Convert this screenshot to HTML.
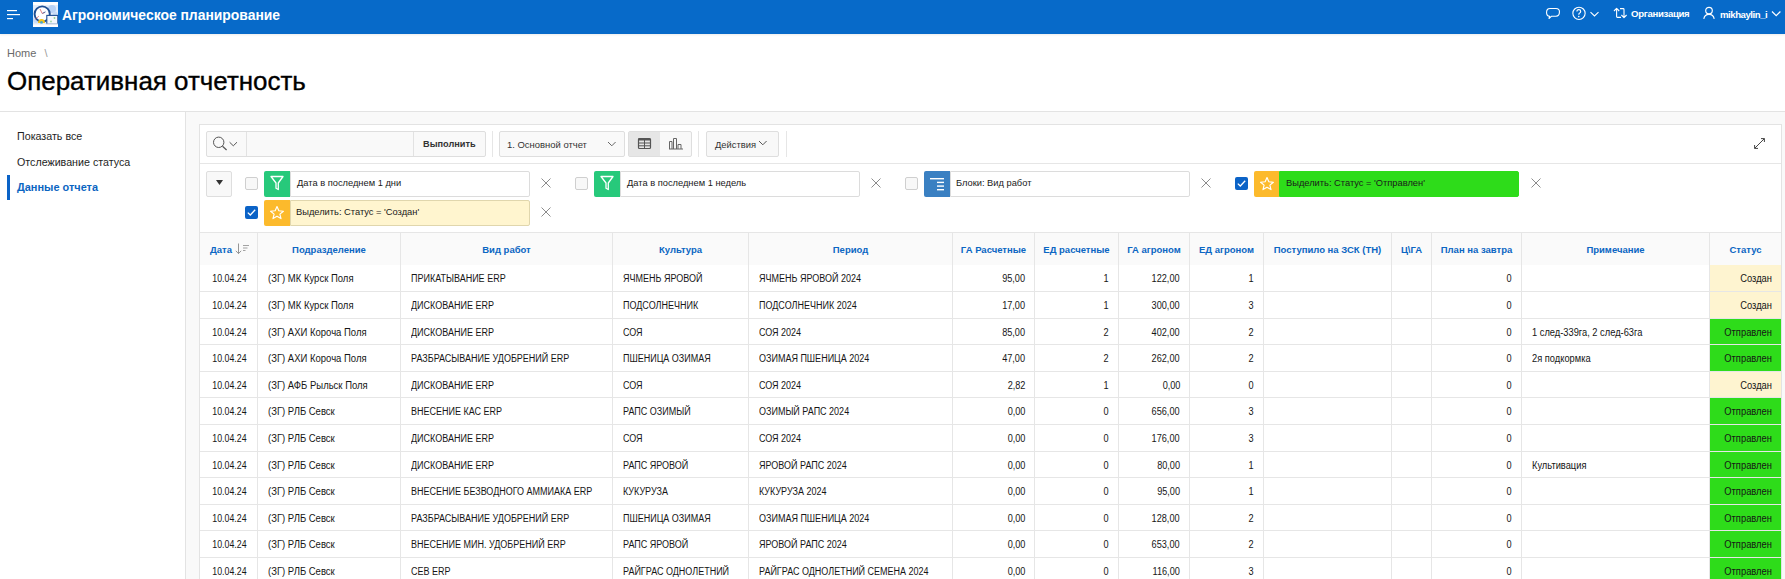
<!DOCTYPE html>
<html><head><meta charset="utf-8">
<style>
*{box-sizing:border-box;margin:0;padding:0}
html,body{width:1785px;height:579px;overflow:hidden;background:#f9f9f9;font-family:"Liberation Sans",sans-serif;color:#262626}
.a{position:absolute}
#hdr{left:0;top:0;width:1785px;height:34px;background:#076ac9}
#crumb{left:0;top:34px;width:1785px;height:78px;background:#fff;border-bottom:1px solid #e3e3e3}
#side{left:0;top:112px;width:186px;height:467px;background:#fff;border-right:1px solid #e3e3e3}
#reg{left:199px;top:124px;width:1583px;height:460px;background:#fff;border:1px solid #e3e3e3}
.t{white-space:nowrap;line-height:1}
.nav{left:17px;font-size:10.7px;color:#1e1e1e}
.sep{width:1px;background:#e6e6e6}
.btn{border:1px solid #dedede;background:#f8f8f8;border-radius:2px}
.chk{width:13px;height:13px;border:1px solid #cfcfcf;background:#f8f8f8;border-radius:2px}
.chk.on{background:#0b63c7;border-color:#0b63c7}
.ico{width:26px;height:26px;border-radius:2px 0 0 2px}
.lbl{height:26px;border:1px solid #dcdcdc;background:#fff;border-radius:0 2px 2px 0}
.ft{font-size:9.3px;color:#1a1a1a}
.x{width:10px;height:10px}
.trow{left:200px;width:1581px;display:flex;border-bottom:1px solid #e6e6e6;font-size:9.15px;color:#161616}
.trow .c{height:100%;border-right:1px solid #e6e6e6;display:flex;align-items:center;justify-content:center;white-space:nowrap;overflow:hidden;padding-top:1px}
.trow .c.nb{border-right:0}
.trow .c.l{justify-content:flex-start;padding-left:10px}
.trow .c.r{justify-content:flex-end;padding-right:9px}
.trow .c.up{font-size:8.9px}
.th{border-top:1px solid #e6e6e6;border-bottom:0;background:#fafafa;font-weight:bold;color:#0b66c3;font-size:9.5px}
.th .c{padding-top:0}
.trow .s{display:inline-block;font-size:10px;transform:scaleX(0.915)}
.trow .l .s{transform-origin:0 50%}
.trow .r .s{transform-origin:100% 50%}
.trow .up .s{transform:scaleX(0.9)}
.trow .c:nth-child(1) .s{transform:scaleX(0.88);margin-left:1px}
.trow .c:nth-child(2) .s{transform:scaleX(0.95)}
.trow .c:nth-child(13) .s{transform:scaleX(0.93)}
.trow .c:nth-child(14) .s{transform:scaleX(0.935)}

.st1{background:#fef4d0}
.st2{background:#2edc1a}
</style></head><body>
<div id="hdr" class="a" style="box-shadow:0 1px 2px rgba(0,0,0,.08);z-index:2">
  <svg class="a" style="left:7px;top:9px" width="14" height="11" viewBox="0 0 14 11"><rect x="0" y="1" width="10" height="1.2" fill="#fff"/><rect x="0" y="5" width="13" height="1.2" fill="#fff"/><rect x="0" y="9" width="6" height="1.2" fill="#fff"/></svg>
  <svg class="a" style="left:33px;top:2px" width="25" height="25" viewBox="0 0 25 25"><rect width="25" height="25" fill="#fff"/><rect x="0" y="3" width="25" height="19" fill="#e3eefb"/><circle cx="19" cy="7" r="4" fill="#b9d3f5"/><circle cx="22" cy="12" r="2.5" fill="#c7dcf7"/><circle cx="3" cy="18" r="3" fill="#c7dcf7"/><circle cx="9.2" cy="12" r="7.6" fill="#fff" stroke="#1f4f93" stroke-width="1.9"/><path d="M7,7 L9.2,11.5 L12,10.4" fill="none" stroke="#d94a4a" stroke-width="0.7"/><path d="M9.5,11.3 L12.6,9.8" stroke="#2d5fa8" stroke-width="0.8"/><path d="M2,17.5 L6,14" stroke="#d94a4a" stroke-width="0.6"/><rect x="13.8" y="13.4" width="11" height="8.8" fill="#f4f8fd" stroke="#1f4f93" stroke-width="1.1"/><circle cx="21.5" cy="16" r="0.9" fill="#8fd18f"/><circle cx="18" cy="19.5" r="0.9" fill="#9fd59f"/><path d="M5,21 Q5,17 8.5,17 Q12,17 12,21 Z" fill="#f3c21a"/><circle cx="8.5" cy="20.5" r="1.5" fill="#4aa6c9"/><rect x="0" y="22.2" width="25" height="2.8" fill="#fff"/><rect x="0" y="21.6" width="25" height="0.8" fill="#dfe8f3"/></svg>
  <div class="a t" style="left:62px;top:9px;font-size:13.9px;font-weight:bold;color:#fff">Агрономическое планирование</div>
  <svg class="a" style="left:1544px;top:6px" width="18" height="15" viewBox="0 0 18 15"><path d="M6,2.55 H12 Q15.45,2.55 15.45,5.8 Q15.45,10.2 12,10.2 H7.6 L5,12.5 L5.6,10.2 Q2.55,10 2.55,6.4 Q2.55,2.55 6,2.55 Z" fill="none" stroke="#fff" stroke-width="1.1" stroke-linejoin="round"/></svg>
  <svg class="a" style="left:1570px;top:5px" width="30" height="16" viewBox="0 0 30 16"><circle cx="9" cy="8.35" r="6.15" fill="none" stroke="#fff" stroke-width="1.1"/><path d="M6.9,6.6 Q6.9,4.6 8.8,4.6 Q10.7,4.6 10.7,6.4 Q10.7,7.6 9.4,8.2 Q8.8,8.6 8.8,9.7" fill="none" stroke="#fff" stroke-width="1.15"/><circle cx="8.8" cy="11.6" r="0.8" fill="#fff"/><polyline points="20.5,7.2 24.5,11 28.5,7.2" fill="none" stroke="#fff" stroke-width="1.1"/></svg>
  <svg class="a" style="left:1612px;top:6px" width="17" height="15" viewBox="0 0 17 15"><path d="M9,11.4 H5.4 Q4.6,11.4 4.6,10.6 V2.4 M2,5 L4.6,2.3 L7.2,5" fill="none" stroke="#fff" stroke-width="1.1" stroke-linejoin="round"/><path d="M8,2.6 H11.2 Q12,2.6 12,3.4 V11.6 M9.4,9 L12,11.7 L14.6,9" fill="none" stroke="#fff" stroke-width="1.1" stroke-linejoin="round"/></svg>
  <div class="a t" style="left:1631px;top:9px;font-size:9.6px;color:#fff;font-weight:bold;letter-spacing:-0.3px">Организация</div>
  <svg class="a" style="left:1702px;top:6px" width="14" height="14" viewBox="0 0 14 14"><circle cx="7" cy="4.6" r="3.3" fill="none" stroke="#fff" stroke-width="1.15"/><path d="M1.8,12.8 Q2.6,8.4 7,8.4 Q11.4,8.4 12.2,12.8" fill="none" stroke="#fff" stroke-width="1.15"/></svg>
  <div class="a t" style="left:1720px;top:9.5px;font-size:9.6px;color:#fff;font-weight:bold;letter-spacing:-0.45px">mikhaylin_i</div>
  <svg class="a" style="left:1771px;top:10px" width="11" height="8" viewBox="0 0 11 8"><polyline points="1,1.5 5.2,5.7 9.4,1.5" fill="none" stroke="#fff" stroke-width="1.2"/></svg>
</div>
<div id="crumb" class="a">
  <div class="a t" style="left:7px;top:14px;font-size:11px;color:#6a6a6a">Home <span style="margin-left:5px;color:#9a9a9a">\</span></div>
  <div class="a t" style="left:7px;top:35px;font-size:25.95px;color:#000;-webkit-text-stroke:0.35px #000">Оперативная отчетность</div>
</div>
<div id="side" class="a">
  <div class="a t nav" style="top:19px">Показать все</div>
  <div class="a t nav" style="top:45px">Отслеживание статуса</div>
  <div class="a" style="left:7px;top:63px;width:3px;height:25px;background:#0b63c7"></div>
  <div class="a t nav" style="top:70px;font-weight:bold;color:#0b65c2;font-size:10.95px">Данные отчета</div>
</div>
<div id="reg" class="a"></div>
<!-- toolbar (absolute to page) -->
<div class="a" style="left:200px;top:163px;width:1581px;height:1px;background:#e6e6e6"></div>
<div class="a btn" style="left:206px;top:131px;width:280px;height:26px;background:#f9f9f9"></div>
<div class="a sep" style="left:246px;top:132px;height:24px;background:#e2e2e2"></div>
<div class="a sep" style="left:413px;top:132px;height:24px;background:#e2e2e2"></div>
<svg class="a" style="left:211px;top:135px" width="30" height="17" viewBox="0 0 30 17"><circle cx="7.7" cy="7.3" r="5.2" fill="none" stroke="#555" stroke-width="1"/><line x1="11.5" y1="11.2" x2="15.6" y2="15" stroke="#555" stroke-width="1.2"/><polyline points="18.6,7.2 22.3,10.8 26,7.2" fill="none" stroke="#555" stroke-width="1"/></svg>
<div class="a t" style="left:423px;top:140px;font-size:9.2px;font-weight:bold;color:#333">Выполнить</div>
<div class="a sep" style="left:492px;top:131px;height:26px"></div>
<div class="a btn" style="left:499px;top:131px;width:126px;height:26px;background:#f9f9f9"></div>
<div class="a t" style="left:507px;top:140px;font-size:9.45px;color:#333">1. Основной отчет</div>
<svg class="a" style="left:607px;top:141px" width="10" height="6" viewBox="0 0 10 6"><polyline points="1,1 4.8,4.8 8.6,1" fill="none" stroke="#666" stroke-width="1"/></svg>
<div class="a btn" style="left:628px;top:131px;width:64px;height:26px;background:#f8f8f8"></div>
<div class="a" style="left:629px;top:132px;width:31px;height:24px;background:#e6e6e6"></div>
<svg class="a" style="left:637px;top:137px" width="15" height="13" viewBox="0 0 15 13"><rect x="1.5" y="1.5" width="12" height="10" rx="1" fill="none" stroke="#555" stroke-width="1.2"/><rect x="1.5" y="1.5" width="12" height="2" fill="#555"/><line x1="1.5" y1="6" x2="13.5" y2="6" stroke="#555"/><line x1="1.5" y1="8.8" x2="13.5" y2="8.8" stroke="#555"/><line x1="7.5" y1="3" x2="7.5" y2="11.5" stroke="#555"/></svg>
<svg class="a" style="left:668px;top:137px" width="16" height="13" viewBox="0 0 16 13"><polyline points="1.5,12 1.5,4.5 4,4.5 4,12" fill="none" stroke="#666" stroke-width="1"/><polyline points="5.5,12 5.5,1.5 8.5,1.5 8.5,12" fill="none" stroke="#666" stroke-width="1"/><polyline points="10,12 10,7.5 13,7.5 13,12" fill="none" stroke="#666" stroke-width="1"/><line x1="1" y1="12" x2="15" y2="12" stroke="#666"/></svg>
<div class="a sep" style="left:698px;top:131px;height:26px"></div>
<div class="a btn" style="left:706px;top:131px;width:73px;height:26px;background:#f8f8f8"></div>
<div class="a t" style="left:715px;top:141px;font-size:9.35px;color:#333">Действия</div>
<svg class="a" style="left:758px;top:140px" width="10" height="6" viewBox="0 0 10 6"><polyline points="1,1 4.8,4.8 8.6,1" fill="none" stroke="#555" stroke-width="1"/></svg>
<div class="a sep" style="left:786px;top:131px;height:26px"></div>
<svg class="a" style="left:1752px;top:136px" width="15" height="15" viewBox="0 0 15 15"><line x1="2.6" y1="12.4" x2="12.4" y2="2.6" stroke="#444" stroke-width="1"/><polyline points="2.6,9 2.6,12.4 6,12.4" fill="none" stroke="#444" stroke-width="1"/><polyline points="9,2.6 12.4,2.6 12.4,6" fill="none" stroke="#444" stroke-width="1"/></svg>

<div class="a btn" style="left:206px;top:171px;width:26px;height:26px"></div>
<svg class="a" style="left:215px;top:179px" width="9" height="7" viewBox="0 0 9 7"><path d="M1,1 H8 L4.5,6 Z" fill="#333"/></svg>
<div class="a chk" style="left:245px;top:177px"></div>
<div class="a ico" style="left:264px;top:171px;background:#27c97b"></div>
<svg class="a" style="left:270px;top:175px" width="14" height="16" viewBox="0 0 14 16"><path d="M1,1.5 H13 L8.3,8 V14.5 L6,13.2 V8 Z" fill="none" stroke="#fff" stroke-width="1.3" stroke-linejoin="round"/></svg>
<div class="a lbl" style="left:290px;top:171px;width:240px;background:#fff;border-color:#dcdcdc"></div>
<div class="a t ft" style="left:297px;top:178.5px">Дата в последнем 1 дни</div>
<svg class="a" style="left:541px;top:178px" width="10" height="10" viewBox="0 0 10 10"><path d="M0.5,0.5 L9.5,9.5 M9.5,0.5 L0.5,9.5" stroke="#8c8c8c" stroke-width="1"/></svg>
<div class="a chk" style="left:575px;top:177px"></div>
<div class="a ico" style="left:594px;top:171px;background:#27c97b"></div>
<svg class="a" style="left:600px;top:175px" width="14" height="16" viewBox="0 0 14 16"><path d="M1,1.5 H13 L8.3,8 V14.5 L6,13.2 V8 Z" fill="none" stroke="#fff" stroke-width="1.3" stroke-linejoin="round"/></svg>
<div class="a lbl" style="left:620px;top:171px;width:240px;background:#fff;border-color:#dcdcdc"></div>
<div class="a t ft" style="left:627px;top:178.5px">Дата в последнем 1 недель</div>
<svg class="a" style="left:871px;top:178px" width="10" height="10" viewBox="0 0 10 10"><path d="M0.5,0.5 L9.5,9.5 M9.5,0.5 L0.5,9.5" stroke="#8c8c8c" stroke-width="1"/></svg>
<div class="a chk" style="left:905px;top:177px"></div>
<div class="a ico" style="left:924px;top:171px;background:#3a80c2"></div>
<svg class="a" style="left:929px;top:177px" width="16" height="14" viewBox="0 0 16 14"><rect x="1" y="1" width="14" height="1.4" fill="#fff"/><rect x="8" y="4.7" width="7" height="1.4" fill="#fff"/><rect x="8" y="8.4" width="7" height="1.4" fill="#fff"/><rect x="8" y="12" width="7" height="1.4" fill="#fff"/></svg>
<div class="a lbl" style="left:950px;top:171px;width:240px;background:#fff;border-color:#dcdcdc"></div>
<div class="a t ft" style="left:956px;top:178.5px">Блоки: Вид работ</div>
<svg class="a" style="left:1201px;top:178px" width="10" height="10" viewBox="0 0 10 10"><path d="M0.5,0.5 L9.5,9.5 M9.5,0.5 L0.5,9.5" stroke="#8c8c8c" stroke-width="1"/></svg>
<svg class="a" style="left:1235px;top:177px" width="13" height="13" viewBox="0 0 13 13"><rect x="0" y="0" width="13" height="13" rx="2" fill="#0b63c7"/><polyline points="2.8,6.6 5.3,9 10.2,3.8" fill="none" stroke="#fff" stroke-width="1.3"/></svg>
<div class="a ico" style="left:1254px;top:171px;width:25px;background:#fcba2c"></div>
<svg class="a" style="left:1259px;top:176px" width="16" height="15" viewBox="0 0 16 15"><path d="M8,1.6 L9.85,5.8 L14.4,6.2 L10.9,9.1 L12,13.6 L8,11.2 L4,13.6 L5.1,9.1 L1.6,6.2 L6.15,5.8 Z" fill="none" stroke="#fff" stroke-width="1.15" stroke-linejoin="round"/></svg>
<div class="a lbl" style="left:1279px;top:171px;width:240px;background:#2edc1a;border-color:#2edc1a"></div>
<div class="a t ft" style="left:1286px;top:178.5px">Выделить: Статус = 'Отправлен'</div>
<svg class="a" style="left:1531px;top:178px" width="10" height="10" viewBox="0 0 10 10"><path d="M0.5,0.5 L9.5,9.5 M9.5,0.5 L0.5,9.5" stroke="#8c8c8c" stroke-width="1"/></svg>
<svg class="a" style="left:245px;top:206px" width="13" height="13" viewBox="0 0 13 13"><rect x="0" y="0" width="13" height="13" rx="2" fill="#0b63c7"/><polyline points="2.8,6.6 5.3,9 10.2,3.8" fill="none" stroke="#fff" stroke-width="1.3"/></svg>
<div class="a ico" style="left:264px;top:200px;background:#fcba2c"></div>
<svg class="a" style="left:269px;top:205px" width="16" height="15" viewBox="0 0 16 15"><path d="M8,1.6 L9.85,5.8 L14.4,6.2 L10.9,9.1 L12,13.6 L8,11.2 L4,13.6 L5.1,9.1 L1.6,6.2 L6.15,5.8 Z" fill="none" stroke="#fff" stroke-width="1.15" stroke-linejoin="round"/></svg>
<div class="a lbl" style="left:290px;top:200px;width:240px;background:#fff5cf;border-color:#e0d6ad"></div>
<div class="a t ft" style="left:296px;top:207.5px">Выделить: Статус = 'Создан'</div>
<svg class="a" style="left:541px;top:207px" width="10" height="10" viewBox="0 0 10 10"><path d="M0.5,0.5 L9.5,9.5 M9.5,0.5 L0.5,9.5" stroke="#8c8c8c" stroke-width="1"/></svg>
<!--TABLE-->
<div class="a trow th" style="top:232px;height:33px">
<div class="c" style="width:58px;justify-content:flex-start;padding-left:10px">Дата<svg style="margin-left:3px;margin-top:-1px" width="15" height="12" viewBox="0 0 15 12"><path d="M3.5,0.5 V10.5 M0.8,7.8 L3.5,10.6 L6.2,7.8" fill="none" stroke="#8a8a8a" stroke-width="0.9"/><path d="M8,2.5 H14 M8,5 H12.5 M8,7.5 H10.5" stroke="#999" stroke-width="0.9"/></svg></div>
<div class="c" style="width:143px">Подразделение</div>
<div class="c" style="width:212px">Вид работ</div>
<div class="c" style="width:136px">Культура</div>
<div class="c" style="width:204px">Период</div>
<div class="c" style="width:82px">ГА Расчетные</div>
<div class="c" style="width:84px">ЕД расчетные</div>
<div class="c" style="width:71px">ГА агроном</div>
<div class="c" style="width:74px">ЕД агроном</div>
<div class="c" style="width:128px">Поступило на ЗСК (ТН)</div>
<div class="c" style="width:40px">Ц\ГА</div>
<div class="c" style="width:90px">План на завтра</div>
<div class="c" style="width:188px">Примечание</div>
<div class="c nb" style="width:71px">Статус</div>
</div>
<div class="a trow" style="top:265px;height:27px">
<div class="c" style="width:58px"><span class="s">10.04.24</span></div>
<div class="c l" style="width:143px"><span class="s">(ЗГ) МК Курск Поля</span></div>
<div class="c l up" style="width:212px"><span class="s">ПРИКАТЫВАНИЕ ERP</span></div>
<div class="c l up" style="width:136px"><span class="s">ЯЧМЕНЬ ЯРОВОЙ</span></div>
<div class="c l up" style="width:204px"><span class="s">ЯЧМЕНЬ ЯРОВОЙ 2024</span></div>
<div class="c r" style="width:82px"><span class="s">95,00</span></div>
<div class="c r" style="width:84px"><span class="s">1</span></div>
<div class="c r" style="width:71px"><span class="s">122,00</span></div>
<div class="c r" style="width:74px"><span class="s">1</span></div>
<div class="c l" style="width:128px"></div>
<div class="c l" style="width:40px"></div>
<div class="c r" style="width:90px"><span class="s">0</span></div>
<div class="c l" style="width:188px"></div>
<div class="c r nb st1" style="width:71px"><span class="s">Создан</span></div>
</div>
<div class="a trow" style="top:292px;height:27px">
<div class="c" style="width:58px"><span class="s">10.04.24</span></div>
<div class="c l" style="width:143px"><span class="s">(ЗГ) МК Курск Поля</span></div>
<div class="c l up" style="width:212px"><span class="s">ДИСКОВАНИЕ ERP</span></div>
<div class="c l up" style="width:136px"><span class="s">ПОДСОЛНЕЧНИК</span></div>
<div class="c l up" style="width:204px"><span class="s">ПОДСОЛНЕЧНИК 2024</span></div>
<div class="c r" style="width:82px"><span class="s">17,00</span></div>
<div class="c r" style="width:84px"><span class="s">1</span></div>
<div class="c r" style="width:71px"><span class="s">300,00</span></div>
<div class="c r" style="width:74px"><span class="s">3</span></div>
<div class="c l" style="width:128px"></div>
<div class="c l" style="width:40px"></div>
<div class="c r" style="width:90px"><span class="s">0</span></div>
<div class="c l" style="width:188px"></div>
<div class="c r nb st1" style="width:71px"><span class="s">Создан</span></div>
</div>
<div class="a trow" style="top:319px;height:26px">
<div class="c" style="width:58px"><span class="s">10.04.24</span></div>
<div class="c l" style="width:143px"><span class="s">(ЗГ) АХИ Короча Поля</span></div>
<div class="c l up" style="width:212px"><span class="s">ДИСКОВАНИЕ ERP</span></div>
<div class="c l up" style="width:136px"><span class="s">СОЯ</span></div>
<div class="c l up" style="width:204px"><span class="s">СОЯ 2024</span></div>
<div class="c r" style="width:82px"><span class="s">85,00</span></div>
<div class="c r" style="width:84px"><span class="s">2</span></div>
<div class="c r" style="width:71px"><span class="s">402,00</span></div>
<div class="c r" style="width:74px"><span class="s">2</span></div>
<div class="c l" style="width:128px"></div>
<div class="c l" style="width:40px"></div>
<div class="c r" style="width:90px"><span class="s">0</span></div>
<div class="c l" style="width:188px"><span class="s">1 след-339га, 2 след-63га</span></div>
<div class="c r nb st2" style="width:71px"><span class="s">Отправлен</span></div>
</div>
<div class="a trow" style="top:345px;height:27px">
<div class="c" style="width:58px"><span class="s">10.04.24</span></div>
<div class="c l" style="width:143px"><span class="s">(ЗГ) АХИ Короча Поля</span></div>
<div class="c l up" style="width:212px"><span class="s">РАЗБРАСЫВАНИЕ УДОБРЕНИЙ ERP</span></div>
<div class="c l up" style="width:136px"><span class="s">ПШЕНИЦА ОЗИМАЯ</span></div>
<div class="c l up" style="width:204px"><span class="s">ОЗИМАЯ ПШЕНИЦА 2024</span></div>
<div class="c r" style="width:82px"><span class="s">47,00</span></div>
<div class="c r" style="width:84px"><span class="s">2</span></div>
<div class="c r" style="width:71px"><span class="s">262,00</span></div>
<div class="c r" style="width:74px"><span class="s">2</span></div>
<div class="c l" style="width:128px"></div>
<div class="c l" style="width:40px"></div>
<div class="c r" style="width:90px"><span class="s">0</span></div>
<div class="c l" style="width:188px"><span class="s">2я подкормка</span></div>
<div class="c r nb st2" style="width:71px"><span class="s">Отправлен</span></div>
</div>
<div class="a trow" style="top:372px;height:26px">
<div class="c" style="width:58px"><span class="s">10.04.24</span></div>
<div class="c l" style="width:143px"><span class="s">(ЗГ) АФБ Рыльск Поля</span></div>
<div class="c l up" style="width:212px"><span class="s">ДИСКОВАНИЕ ERP</span></div>
<div class="c l up" style="width:136px"><span class="s">СОЯ</span></div>
<div class="c l up" style="width:204px"><span class="s">СОЯ 2024</span></div>
<div class="c r" style="width:82px"><span class="s">2,82</span></div>
<div class="c r" style="width:84px"><span class="s">1</span></div>
<div class="c r" style="width:71px"><span class="s">0,00</span></div>
<div class="c r" style="width:74px"><span class="s">0</span></div>
<div class="c l" style="width:128px"></div>
<div class="c l" style="width:40px"></div>
<div class="c r" style="width:90px"><span class="s">0</span></div>
<div class="c l" style="width:188px"></div>
<div class="c r nb st1" style="width:71px"><span class="s">Создан</span></div>
</div>
<div class="a trow" style="top:398px;height:27px">
<div class="c" style="width:58px"><span class="s">10.04.24</span></div>
<div class="c l" style="width:143px"><span class="s">(ЗГ) РЛБ Севск</span></div>
<div class="c l up" style="width:212px"><span class="s">ВНЕСЕНИЕ КАС ERP</span></div>
<div class="c l up" style="width:136px"><span class="s">РАПС ОЗИМЫЙ</span></div>
<div class="c l up" style="width:204px"><span class="s">ОЗИМЫЙ РАПС 2024</span></div>
<div class="c r" style="width:82px"><span class="s">0,00</span></div>
<div class="c r" style="width:84px"><span class="s">0</span></div>
<div class="c r" style="width:71px"><span class="s">656,00</span></div>
<div class="c r" style="width:74px"><span class="s">3</span></div>
<div class="c l" style="width:128px"></div>
<div class="c l" style="width:40px"></div>
<div class="c r" style="width:90px"><span class="s">0</span></div>
<div class="c l" style="width:188px"></div>
<div class="c r nb st2" style="width:71px"><span class="s">Отправлен</span></div>
</div>
<div class="a trow" style="top:425px;height:27px">
<div class="c" style="width:58px"><span class="s">10.04.24</span></div>
<div class="c l" style="width:143px"><span class="s">(ЗГ) РЛБ Севск</span></div>
<div class="c l up" style="width:212px"><span class="s">ДИСКОВАНИЕ ERP</span></div>
<div class="c l up" style="width:136px"><span class="s">СОЯ</span></div>
<div class="c l up" style="width:204px"><span class="s">СОЯ 2024</span></div>
<div class="c r" style="width:82px"><span class="s">0,00</span></div>
<div class="c r" style="width:84px"><span class="s">0</span></div>
<div class="c r" style="width:71px"><span class="s">176,00</span></div>
<div class="c r" style="width:74px"><span class="s">3</span></div>
<div class="c l" style="width:128px"></div>
<div class="c l" style="width:40px"></div>
<div class="c r" style="width:90px"><span class="s">0</span></div>
<div class="c l" style="width:188px"></div>
<div class="c r nb st2" style="width:71px"><span class="s">Отправлен</span></div>
</div>
<div class="a trow" style="top:452px;height:26px">
<div class="c" style="width:58px"><span class="s">10.04.24</span></div>
<div class="c l" style="width:143px"><span class="s">(ЗГ) РЛБ Севск</span></div>
<div class="c l up" style="width:212px"><span class="s">ДИСКОВАНИЕ ERP</span></div>
<div class="c l up" style="width:136px"><span class="s">РАПС ЯРОВОЙ</span></div>
<div class="c l up" style="width:204px"><span class="s">ЯРОВОЙ РАПС 2024</span></div>
<div class="c r" style="width:82px"><span class="s">0,00</span></div>
<div class="c r" style="width:84px"><span class="s">0</span></div>
<div class="c r" style="width:71px"><span class="s">80,00</span></div>
<div class="c r" style="width:74px"><span class="s">1</span></div>
<div class="c l" style="width:128px"></div>
<div class="c l" style="width:40px"></div>
<div class="c r" style="width:90px"><span class="s">0</span></div>
<div class="c l" style="width:188px"><span class="s">Культивация</span></div>
<div class="c r nb st2" style="width:71px"><span class="s">Отправлен</span></div>
</div>
<div class="a trow" style="top:478px;height:27px">
<div class="c" style="width:58px"><span class="s">10.04.24</span></div>
<div class="c l" style="width:143px"><span class="s">(ЗГ) РЛБ Севск</span></div>
<div class="c l up" style="width:212px"><span class="s">ВНЕСЕНИЕ БЕЗВОДНОГО АММИАКА ERP</span></div>
<div class="c l up" style="width:136px"><span class="s">КУКУРУЗА</span></div>
<div class="c l up" style="width:204px"><span class="s">КУКУРУЗА 2024</span></div>
<div class="c r" style="width:82px"><span class="s">0,00</span></div>
<div class="c r" style="width:84px"><span class="s">0</span></div>
<div class="c r" style="width:71px"><span class="s">95,00</span></div>
<div class="c r" style="width:74px"><span class="s">1</span></div>
<div class="c l" style="width:128px"></div>
<div class="c l" style="width:40px"></div>
<div class="c r" style="width:90px"><span class="s">0</span></div>
<div class="c l" style="width:188px"></div>
<div class="c r nb st2" style="width:71px"><span class="s">Отправлен</span></div>
</div>
<div class="a trow" style="top:505px;height:26px">
<div class="c" style="width:58px"><span class="s">10.04.24</span></div>
<div class="c l" style="width:143px"><span class="s">(ЗГ) РЛБ Севск</span></div>
<div class="c l up" style="width:212px"><span class="s">РАЗБРАСЫВАНИЕ УДОБРЕНИЙ ERP</span></div>
<div class="c l up" style="width:136px"><span class="s">ПШЕНИЦА ОЗИМАЯ</span></div>
<div class="c l up" style="width:204px"><span class="s">ОЗИМАЯ ПШЕНИЦА 2024</span></div>
<div class="c r" style="width:82px"><span class="s">0,00</span></div>
<div class="c r" style="width:84px"><span class="s">0</span></div>
<div class="c r" style="width:71px"><span class="s">128,00</span></div>
<div class="c r" style="width:74px"><span class="s">2</span></div>
<div class="c l" style="width:128px"></div>
<div class="c l" style="width:40px"></div>
<div class="c r" style="width:90px"><span class="s">0</span></div>
<div class="c l" style="width:188px"></div>
<div class="c r nb st2" style="width:71px"><span class="s">Отправлен</span></div>
</div>
<div class="a trow" style="top:531px;height:27px">
<div class="c" style="width:58px"><span class="s">10.04.24</span></div>
<div class="c l" style="width:143px"><span class="s">(ЗГ) РЛБ Севск</span></div>
<div class="c l up" style="width:212px"><span class="s">ВНЕСЕНИЕ МИН. УДОБРЕНИЙ ERP</span></div>
<div class="c l up" style="width:136px"><span class="s">РАПС ЯРОВОЙ</span></div>
<div class="c l up" style="width:204px"><span class="s">ЯРОВОЙ РАПС 2024</span></div>
<div class="c r" style="width:82px"><span class="s">0,00</span></div>
<div class="c r" style="width:84px"><span class="s">0</span></div>
<div class="c r" style="width:71px"><span class="s">653,00</span></div>
<div class="c r" style="width:74px"><span class="s">2</span></div>
<div class="c l" style="width:128px"></div>
<div class="c l" style="width:40px"></div>
<div class="c r" style="width:90px"><span class="s">0</span></div>
<div class="c l" style="width:188px"></div>
<div class="c r nb st2" style="width:71px"><span class="s">Отправлен</span></div>
</div>
<div class="a trow" style="top:558px;height:27px">
<div class="c" style="width:58px"><span class="s">10.04.24</span></div>
<div class="c l" style="width:143px"><span class="s">(ЗГ) РЛБ Севск</span></div>
<div class="c l up" style="width:212px"><span class="s">СЕВ ERP</span></div>
<div class="c l up" style="width:136px"><span class="s">РАЙГРАС ОДНОЛЕТНИЙ</span></div>
<div class="c l up" style="width:204px"><span class="s">РАЙГРАС ОДНОЛЕТНИЙ СЕМЕНА 2024</span></div>
<div class="c r" style="width:82px"><span class="s">0,00</span></div>
<div class="c r" style="width:84px"><span class="s">0</span></div>
<div class="c r" style="width:71px"><span class="s">116,00</span></div>
<div class="c r" style="width:74px"><span class="s">3</span></div>
<div class="c l" style="width:128px"></div>
<div class="c l" style="width:40px"></div>
<div class="c r" style="width:90px"><span class="s">0</span></div>
<div class="c l" style="width:188px"></div>
<div class="c r nb st2" style="width:71px"><span class="s">Отправлен</span></div>
</div>
</body></html>
